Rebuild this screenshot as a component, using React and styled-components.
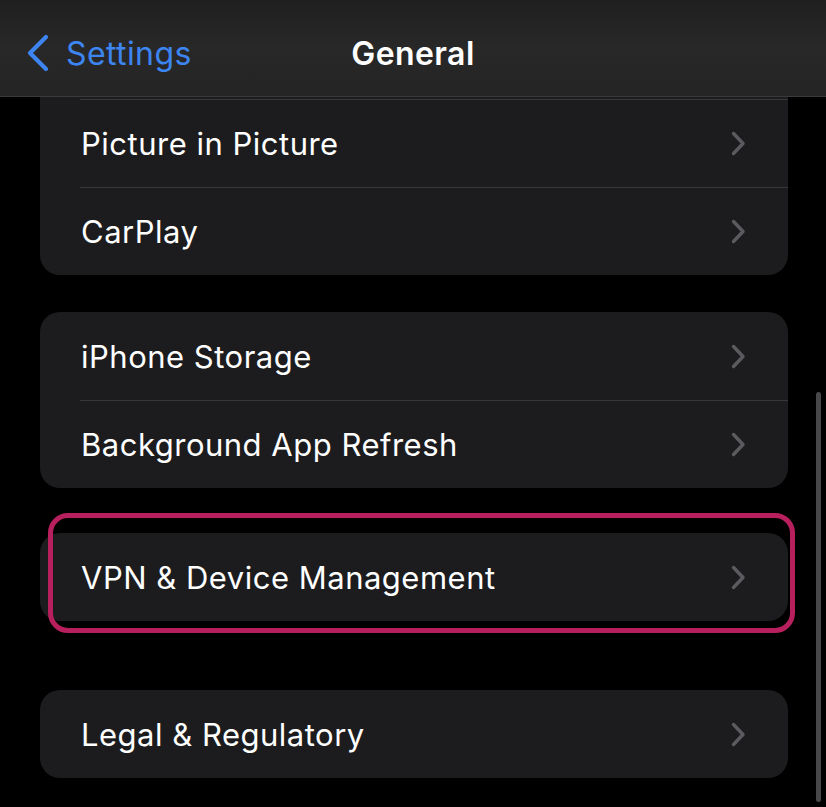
import React from 'react'
import styled, { createGlobalStyle } from 'styled-components'

const GlobalStyle = createGlobalStyle`
  html, body {
    margin: 0;
    padding: 0;
    background: #000;
  }
  body {
    font-family: Inter, "Noto Sans", "Liberation Sans", sans-serif;
    -webkit-font-smoothing: antialiased;
  }
`

const Screen = styled.div`
  position: relative;
  width: 826px;
  height: 807px;
  background: #000;
  overflow: hidden;
  display: flex;
  flex-direction: column;
`

const NavBar = styled.div`
  position: relative;
  flex: 0 0 86px;
  padding-top: 10px;
  display: flex;
  align-items: center;
  background: linear-gradient(180deg, #1f1f1f 0%, #282828 50%, #242424 100%);
  border-bottom: 1px solid #3a3a3c;
`

const BackButton = styled.div`
  display: flex;
  align-items: center;
  gap: 16px;
  padding-left: 26px;
  color: #3d85f1;
  font-size: 32px;
  letter-spacing: 0.4px;
`

const Title = styled.div`
  position: absolute;
  left: 0;
  right: 0;
  text-align: center;
  color: #fff;
  font-size: 32px;
  font-weight: 600;
  letter-spacing: 0.4px;
  pointer-events: none;
`

const Content = styled.div`
  flex: 1;
  display: flex;
  flex-direction: column;
  padding: 0 38px 0 40px;
`

const Card = styled.div`
  position: relative;
  background: #1c1c1e;
  border-radius: ${({ $continued }) => ($continued ? '0 0 20px 20px' : '20px')};
  padding-top: ${({ $continued }) => ($continued ? '2px' : '0')};
  margin-top: ${({ $gap }) => $gap || 0}px;
`

const Row = styled.div`
  position: relative;
  height: 88px;
  display: flex;
  align-items: center;
  justify-content: space-between;
  padding: 0 42px 0 41px;
  &:not(:first-child)::before,
  &[data-top='true']::before {
    content: '';
    position: absolute;
    top: 0;
    left: 40px;
    right: 0;
    height: 1px;
    background: #38383a;
  }
`

const Label = styled.span`
  color: #fff;
  font-size: 31px;
  letter-spacing: 0.5px;
`

const Highlight = styled.div`
  position: absolute;
  top: -20px;
  bottom: -12px;
  left: 8px;
  right: -7px;
  border: 5px solid #b7205c;
  border-radius: 20px;
  pointer-events: none;
`

const ScrollBar = styled.div`
  position: absolute;
  right: 5px;
  top: 392px;
  width: 5px;
  height: 410px;
  border-radius: 3px;
  background: #48484a;
`

const Chevron = () => (
  <svg width="15" height="25" viewBox="0 0 15 25" fill="none">
    <path d="M2.5 2.5 L12 12.5 L2.5 22.5" stroke="#5b5b5f" strokeWidth="3.4" strokeLinecap="round" strokeLinejoin="round" />
  </svg>
)

const BackChevron = () => (
  <svg width="24" height="38" viewBox="0 0 24 38" fill="none">
    <path d="M20 3 L4 19 L20 35" stroke="#3d85f1" strokeWidth="4.2" strokeLinecap="round" strokeLinejoin="round" />
  </svg>
)

const Item = ({ label, top }) => (
  <Row data-top={top ? 'true' : 'false'}>
    <Label>{label}</Label>
    <Chevron />
  </Row>
)

export default function App() {
  return (
    <>
      <GlobalStyle />
      <Screen>
        <NavBar>
          <BackButton>
            <BackChevron />
            <span>Settings</span>
          </BackButton>
          <Title>General</Title>
        </NavBar>
        <Content>
          <Card $continued>
            <Item label="Picture in Picture" top />
            <Item label="CarPlay" />
          </Card>
          <Card $gap={37}>
            <Item label="iPhone Storage" />
            <Item label="Background App Refresh" />
          </Card>
          <Card $gap={45}>
            <Item label="VPN & Device Management" />
            <Highlight />
          </Card>
          <Card $gap={69}>
            <Item label="Legal & Regulatory" />
          </Card>
        </Content>
        <ScrollBar />
      </Screen>
    </>
  )
}
